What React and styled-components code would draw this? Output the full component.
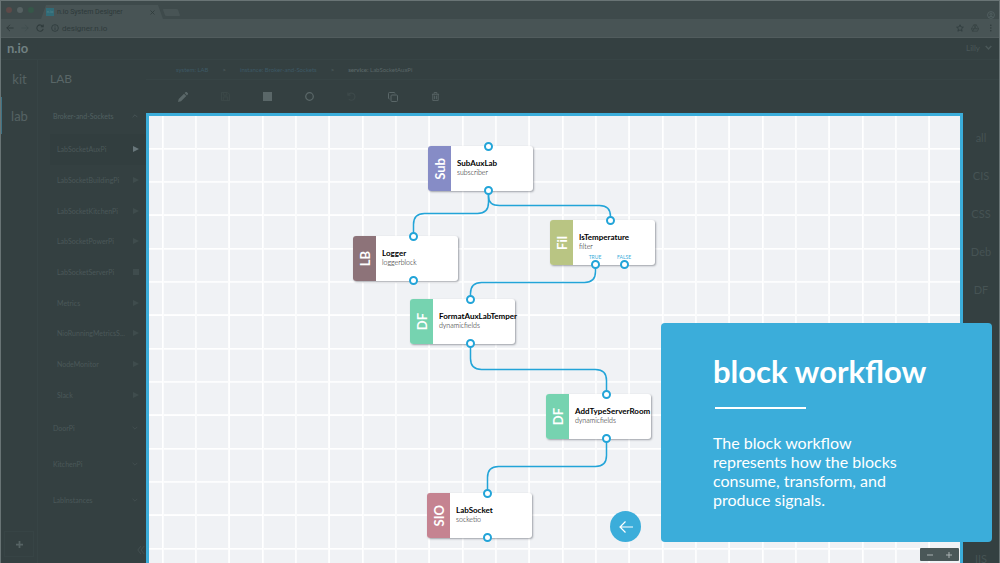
import React from "react";
import styled, { createGlobalStyle } from "styled-components";

const BLUE = "#3badda";
const LINE = "#22a4d8";

const GlobalStyle = createGlobalStyle`
  * { box-sizing: border-box; }
  body { margin: 0; background: #344041; font-family: Lato, "Liberation Sans", sans-serif; }
  button { font: inherit; color: inherit; background: none; border: 0; padding: 0; cursor: pointer; }
  a { color: inherit; text-decoration: none; }
  ul { list-style: none; margin: 0; padding: 0; }
  svg { display: block; }
`;

const Page = styled.div`
  position: relative;
  display: flex;
  flex-direction: column;
  height: 100vh;
  overflow: hidden;
  border: solid #697475;
  border-width: 1px 1px 0;
  background: #344041;
  color: #566364;
`;

const TabBar = styled.div`
  display: flex;
  align-items: flex-end;
  height: 18px;
  flex: none;
  padding: 0 4px 0 5px;
  background: #3e4a4b;
`;

const Lights = styled.div`
  display: flex;
  gap: 5px;
  align-self: center;
  width: 35px;
`;

const Light = styled.span`
  width: 6px;
  height: 6px;
  border-radius: 50%;
  background: ${(p) => p.$color};
`;

const Tab = styled.div`
  display: flex;
  align-items: center;
  width: 122px;
  height: 14px;
  padding: 0 8px 0 5px;
  background: #485455;
  color: #2d393a;
  font: 7px Roboto, sans-serif;
  clip-path: polygon(5px 0, 117px 0, 100% 100%, 0 100%);
`;

const Favicon = styled.span`
  width: 8px;
  height: 8px;
  margin-right: 3px;
  background: #316b77;
  color: #54878f;
  font: 4px/8px Lato, sans-serif;
  text-align: center;
`;

const TabClose = styled.button`
  margin-left: auto;
`;

const NewTab = styled.button`
  width: 15px;
  height: 7px;
  margin: 0 auto 3px 1px;
  background: #485455;
  border-radius: 1px;
  transform: skewX(20deg);
`;

const AddressBar = styled.div`
  display: flex;
  align-items: center;
  gap: 7px;
  height: 19px;
  flex: none;
  padding: 0 5px;
  background: #485455;
  border-bottom: 1px solid #515c5d;
  color: #2f3b3c;
`;

const Address = styled.div`
  display: flex;
  align-items: center;
  flex: 1;
  gap: 3px;
  font: 8px Roboto, sans-serif;
`;

const Header = styled.header`
  display: flex;
  align-items: center;
  justify-content: space-between;
  height: 22px;
  flex: none;
  padding: 0 7px 2px 6px;
  border-bottom: 1px solid #374445;
`;

const Logo = styled.a`
  color: #718082;
  font-size: 13px;
  line-height: 16px;
  font-weight: 700;
`;

const UserMenu = styled.button`
  display: flex;
  align-items: center;
  gap: 5px;
  font-size: 8px;
  color: #4b5859;
`;

const Body = styled.div`
  display: flex;
  flex: 1;
  min-height: 0;
`;

const ModeNav = styled.nav`
  display: flex;
  flex-direction: column;
  width: 37px;
  flex: none;
  border-right: 1px solid #374445;
`;

const Mode = styled.button`
  height: 37px;
  font-size: 13px;
  line-height: 16px;
  border-left: 1px solid ${(p) => (p.$active ? "#3f7385" : "transparent")};
`;

const AddButton = styled.button`
  display: grid;
  place-items: center;
  height: 26px;
  margin: auto 3px 6px;
  border: 1px solid #374445;
`;

const Sidebar = styled.aside`
  display: flex;
  flex-direction: column;
  width: 108px;
  flex: none;
  color: #4b5859;
`;

const SideTitle = styled.h2`
  height: 38px;
  margin: 0;
  padding-left: 12px;
  color: #596667;
  font-size: 12px;
  line-height: 37px;
  font-weight: 400;
`;

const Group = styled.button`
  display: flex;
  align-items: center;
  justify-content: space-between;
  width: 100%;
  height: 36px;
  flex: none;
  padding: 0 8px 0 15px;
  color: ${(p) => (p.$open ? "#526061" : "#4b5859")};
  font-size: 7px;
`;

const Services = styled.ul`
  display: grid;
  grid-auto-rows: 1fr;
  height: 276px;
  flex: none;
`;

const Service = styled.li`
  display: flex;
  align-items: center;
  justify-content: space-between;
  margin-left: 12px;
  padding: 0 7px;
  background: ${(p) => (p.$active ? "#323e3f" : "none")};
  font-size: 7px;
`;

const Collapse = styled.button`
  margin: auto 0 9px auto;
  padding-right: 1px;
`;

const Main = styled.main`
  display: flex;
  flex-direction: column;
  flex: 1;
  min-width: 0;
`;

const Crumbs = styled.nav`
  display: flex;
  align-items: center;
  gap: 14px;
  height: 20px;
  flex: none;
  padding-left: 30px;
  border-bottom: 1px solid #374445;
  font-size: 6px;
  line-height: 8px;
`;

const Crumb = styled.a`
  color: ${(p) => (p.$current ? "#5a6667" : "#3d5965")};
`;

const Tools = styled.div`
  display: flex;
  align-items: center;
  height: 33px;
  flex: none;
  padding-left: 16px;
`;

const Tool = styled.button`
  display: grid;
  place-items: center;
  width: 42px;
  height: 20px;
  color: ${(p) => (p.$off ? "#3d494a" : "#5a6768")};
`;

const Workspace = styled.div`
  display: flex;
  flex: 1;
  min-height: 0;
`;

const Canvas = styled.section`
  position: relative;
  flex: 1;
  min-width: 0;
  overflow: hidden;
  border: 3px solid ${BLUE};
  border-bottom: 0;
  color: #000;
  background-color: #f0f2f5;
  background-image:
    linear-gradient(90deg, #fff 1px, #fafbfc 1px 2px, transparent 2px 33px, #fff 33px, #fafbfc 34px 35px, transparent 35px 66px, #fafbfc 66px, #fff 67px 68px, transparent 68px),
    linear-gradient(#fff 1px, #fafbfc 1px 2px, transparent 2px 33px, #fff 33px, #fafbfc 34px 35px, transparent 35px 66px, #fafbfc 66px, #fff 67px 68px, transparent 68px);
  background-size: 100px 100px;
  background-position: 13px 32px;
`;

const Wires = styled.svg`
  position: absolute;
  left: 0;
  top: 0;
`;

const NodeBox = styled.article`
  position: absolute;
  left: ${(p) => p.$x}px;
  top: ${(p) => p.$y}px;
  display: flex;
  width: 105px;
  height: 45px;
  background: #fff;
  border-radius: 3px;
  box-shadow: 1px 1px 2px rgba(60, 65, 75, 0.45);
`;

const NodeTag = styled.div`
  display: grid;
  place-items: center;
  width: 23px;
  flex: none;
  border-radius: 3px 0 0 3px;
  background: ${(p) => p.$color};
  color: #fff;
  font-size: 13px;
  line-height: 16px;
  font-weight: 700;

  span {
    writing-mode: vertical-rl;
    transform: rotate(180deg);
  }
`;

const NodeText = styled.div`
  flex: 1;
  min-width: 0;
  padding: 13px 0 0 6px;
  white-space: nowrap;
`;

const NodeName = styled.h3`
  margin: 0;
  font-size: 8px;
  line-height: 9px;
  font-weight: 700;
`;

const NodeKind = styled.p`
  margin: 0;
  color: #000;
  font-size: 7px;
  line-height: 8px;
  font-weight: 300;
`;

const Port = styled.span`
  position: absolute;
  left: ${(p) => p.$x - 4}px;
  ${(p) => (p.$out ? "bottom" : "top")}: -4px;
  width: 9px;
  height: 9px;
  border: 2px solid ${LINE};
  border-radius: 50%;
  background: #fff;
`;

const PortLabel = styled.span`
  position: absolute;
  left: ${(p) => p.$x - 15}px;
  bottom: 5px;
  width: 30px;
  color: ${BLUE};
  font-size: 5px;
  line-height: 6px;
  text-align: center;
`;

const BackButton = styled.button`
  position: absolute;
  right: 319px;
  bottom: 21px;
  display: grid;
  place-items: center;
  width: 31px;
  height: 31px;
  border-radius: 50%;
  background: ${BLUE};
  color: #fff;
`;

const ZoomBar = styled.div`
  position: absolute;
  right: 1px;
  bottom: 2px;
  display: flex;
  width: 39px;
  height: 13px;
  border-radius: 1px;
  background: #4a5758;
  color: #b4bcbd;
`;

const ZoomButton = styled.button`
  display: grid;
  place-items: center;
  flex: 1;
`;

const Rail = styled.nav`
  display: flex;
  flex-direction: column;
  width: 36px;
  flex: none;
  padding-top: 6px;
  overflow: hidden;
  color: #465354;
`;

const RailItem = styled.button`
  height: ${(p) => (p.$last ? "20px" : "38px")};
  flex: none;
  margin-top: ${(p) => (p.$last ? "auto" : "0")};
  margin-bottom: ${(p) => (p.$last ? "-6px" : "0")};
  font-size: 11px;
  line-height: 14px;
`;

const Card = styled.section`
  position: absolute;
  right: 7px;
  bottom: 21px;
  width: 331px;
  height: 219px;
  padding: 29px 40px 0 52px;
  border-radius: 4px;
  background: ${BLUE};
  color: #fff;
`;

const CardTitle = styled.h1`
  margin: 0;
  font-size: 31px;
  line-height: 38px;
  font-weight: 700;
  white-space: nowrap;
`;

const CardRule = styled.hr`
  width: 91px;
  height: 2px;
  margin: 17px 0 24px 2px;
  border: 0;
  background: #fff;
`;

const CardText = styled.p`
  width: 200px;
  margin: 0;
  font-size: 16px;
  line-height: 19px;
`;

const Icon = ({ size = 10, w = 1, children }) => (
  <svg width={size} height={size} viewBox="0 0 10 10" fill="none" stroke="currentColor" strokeWidth={w} aria-hidden="true">
    {children}
  </svg>
);

const nodes = [
  { name: "SubAuxLab", kind: "subscriber", tag: "Sub", color: "#868cc6", x: 279, y: 30 },
  { name: "Logger", kind: "loggerblock", tag: "LB", color: "#8d7379", x: 204, y: 120 },
  { name: "IsTemperature", kind: "filter", tag: "Fil", color: "#b9c583", x: 401, y: 104, outs: [{ x: 45, label: "TRUE" }, { x: 74, label: "FALSE" }] },
  { name: "FormatAuxLabTemper", kind: "dynamicfields", tag: "DF", color: "#76d3b0", x: 261, y: 183 },
  { name: "AddTypeServerRoom", kind: "dynamicfields", tag: "DF", color: "#76d3b0", x: 397, y: 278 },
  { name: "LabSocket", kind: "socketio", tag: "SIO", color: "#c58391", x: 278, y: 377 },
];

const wires = [
  "M339 74V86Q339 97 328 97H275Q264 97 264 108V120",
  "M339 74V80Q339 89 350 89H450Q461 89 461 100V104",
  "M446 148V155Q446 166 435 166H332Q321 166 321 177V183",
  "M321 227V242Q321 253 332 253H446Q457 253 457 264V278",
  "M457 322V339Q457 350 446 350H349Q338 350 338 361V377",
];

const services = ["LabSocketAuxPi", "LabSocketBuildingPi", "LabSocketKitchenPi", "LabSocketPowerPi", "LabSocketServerPi", "Metrics", "NioRunningMetricsS...", "NodeMonitor", "Slack"];

function Node({ node }) {
  const outs = node.outs || [{ x: 60 }];
  return (
    <NodeBox $x={node.x} $y={node.y}>
      <NodeTag $color={node.color}><span>{node.tag}</span></NodeTag>
      <NodeText>
        <NodeName>{node.name}</NodeName>
        <NodeKind>{node.kind}</NodeKind>
      </NodeText>
      <Port $x={60} />
      {outs.map((o) => (
        <React.Fragment key={o.x}>
          {o.label && <PortLabel $x={o.x}>{o.label}</PortLabel>}
          <Port $x={o.x} $out />
        </React.Fragment>
      ))}
    </NodeBox>
  );
}

function Browser() {
  return (
    <>
      <TabBar>
        <Lights>
          <Light $color="#5e4a49" />
          <Light $color="#566162" />
          <Light $color="#365749" />
        </Lights>
        <Tab>
          <Favicon>n.io</Favicon>
          n.io System Designer
          <TabClose aria-label="Close tab"><Icon size={5} w={1.5}><path d="M1 1l8 8M9 1l-8 8" /></Icon></TabClose>
        </Tab>
        <NewTab aria-label="New tab" />
        <Icon size={8}><circle cx="5" cy="5" r="4.3" /><circle cx="5" cy="4" r="1.4" /><path d="M2 8q3-3 6 0" /></Icon>
      </TabBar>
      <AddressBar>
        <Icon size={8} w={1.2}><path d="M9.500 5H1M5 1L1 5l4 4" /></Icon>
        <Icon size={8} w={0.3}><path d="M.5 5H9M5 1l4 4-4 4" /></Icon>
        <Icon size={8} w={1.3}><path d="M8.500 3A4 4 0 1 0 9 6M9 .5V3.500H6" /></Icon>
        <Address>
          <Icon size={8}><circle cx="5" cy="5" r="4.200" /><path d="M5 4.300V7.500M5 2.300v1" /></Icon>
          designer.n.io
        </Address>
        <Icon size={8}><path d="M5 1l1.200 2.700 3 .3-2.300 2 .7 3L5 7.400 2.400 9l.7-3L.8 4l3-.3z" /></Icon>
        <Icon size={8} w={0.6}><path d="M3.500 1h3L9.500 6 8 9H2L.5 6zM3.500 1l3 5h3M6.500 1L2 9M.5 6h6" /></Icon>
        <Icon size={8} w={0}><g fill="currentColor"><circle cx="6" cy="1.500" r="1" /><circle cx="6" cy="5" r="1" /><circle cx="6" cy="8.500" r="1" /></g></Icon>
      </AddressBar>
    </>
  );
}

export default function App() {
  return (
    <Page>
      <GlobalStyle />
      <Browser />
      <Header>
        <Logo href="#">n.io</Logo>
        <UserMenu>Lilly <Icon size={7} w={2}><path d="M1 3l4 4 4-4" /></Icon></UserMenu>
      </Header>
      <Body>
        <ModeNav>
          <Mode>kit</Mode>
          <Mode $active>lab</Mode>
          <AddButton aria-label="Add"><Icon size={7} w={2.5}><path d="M5 0v10M0 5h10" /></Icon></AddButton>
        </ModeNav>
        <Sidebar>
          <SideTitle>LAB</SideTitle>
          <Group $open>Broker-and-Sockets <Icon size={6}><path d="M1 7l4-4 4 4" /></Icon></Group>
          <Services>
            {services.map((s, i) => (
              <Service key={s} $active={i === 0}>
                {s}
                <svg width="6" height="6" viewBox="0 0 6 6" fill={i === 0 ? "#68767a" : "#3f4c4d"} aria-hidden="true">
                  {i === 4 ? <path d="M0 0h6v6H0z" /> : <path d="M0 0l6 3-6 3z" />}
                </svg>
              </Service>
            ))}
          </Services>
          {["DoorPi", "KitchenPi", "LabInstances"].map((g) => (
            <Group key={g}>{g} <Icon size={6}><path d="M1 3l4 4 4-4" /></Icon></Group>
          ))}
          <Collapse aria-label="Collapse sidebar"><Icon size={8} w={0.8}><path d="M5 0L1 5l4 5M9 0L5 5l4 5" /></Icon></Collapse>
        </Sidebar>
        <Main>
          <Crumbs>
            <Crumb href="#">system: LAB</Crumb>
            <span>&gt;</span>
            <Crumb href="#">instance: Broker-and-Sockets</Crumb>
            <span>&gt;</span>
            <Crumb href="#" $current><b>service:</b> LabSocketAuxPi</Crumb>
          </Crumbs>
          <Tools>
            <Tool aria-label="Edit"><Icon w={0}><path fill="currentColor" d="M0 10l.7-3L6 1.700l2.300 2.300L3 9.300zM6.600 1.100L7.700 0q.5-.3 1 0L10 1.300q.3.500 0 1L8.900 3.400z" /></Icon></Tool>
            <Tool aria-label="Save" $off><Icon size={9}><path d="M.5.5h7l2 2v7h-9zM2.500.5v3h4v-3M2.500 9.500v-4h5v4" /></Icon></Tool>
            <Tool aria-label="Stop"><Icon size={9} w={0}><path fill="currentColor" d="M0 0h10v10H0z" /></Icon></Tool>
            <Tool aria-label="Record"><Icon size={9} w={1.400}><circle cx="5" cy="5" r="4.200" /></Icon></Tool>
            <Tool aria-label="Undo" $off><Icon size={9} w={1.300}><path d="M1 .5v3h3M1.500 3A4 4 0 1 1 2 8" /></Icon></Tool>
            <Tool aria-label="Duplicate"><Icon><rect x="3" y="3" width="6.500" height="6.500" rx="1" /><path d="M1.500 7Q.5 7 .5 6V1.500q0-1 1-1H6q1 0 1 1" /></Icon></Tool>
            <Tool aria-label="Delete"><Icon size={9}><path d="M1 2.500h8M3.500 2V.6h3V2M2 2.500v7h6v-7M4 4v4M6 4v4" /></Icon></Tool>
          </Tools>
          <Workspace>
            <Canvas aria-label="Block workflow canvas">
              <Wires width="600" height="440" fill="none" stroke={LINE} strokeWidth="1.500" aria-hidden="true">
                {wires.map((d) => <path key={d} d={d} transform="translate(.5 .5)" />)}
              </Wires>
              {nodes.map((n) => <Node key={n.name} node={n} />)}
              <BackButton aria-label="Back">
                <svg width="14" height="12" viewBox="0 0 14 12" fill="none" stroke="currentColor" strokeWidth="1.200"><path d="M14 6H1M6.500 .5L1 6l5.500 5.500" /></svg>
              </BackButton>
              <ZoomBar>
                <ZoomButton aria-label="Zoom out"><Icon size={6} w={1.500}><path d="M0 5h10" /></Icon></ZoomButton>
                <ZoomButton aria-label="Zoom in"><Icon size={6} w={1.500}><path d="M0 5h10M5 0v10" /></Icon></ZoomButton>
              </ZoomBar>
            </Canvas>
            <Rail>
              {["all", "CIS", "CSS", "Deb", "DF"].map((t) => <RailItem key={t}>{t}</RailItem>)}
              <RailItem $last>IIS</RailItem>
            </Rail>
          </Workspace>
        </Main>
      </Body>
      <Card>
        <CardTitle>block workflow</CardTitle>
        <CardRule />
        <CardText>The block workflow represents how the blocks consume, transform, and produce signals.</CardText>
      </Card>
    </Page>
  );
}
